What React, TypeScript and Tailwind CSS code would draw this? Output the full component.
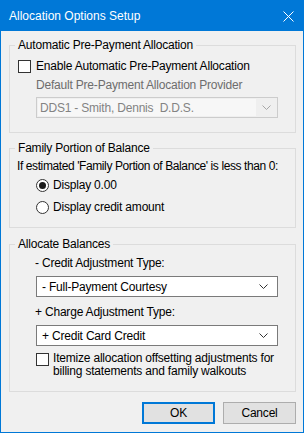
import React from 'react';

const font = { fontFamily: '"Liberation Sans", Arial, sans-serif' };

const Chevron = ({ color = '#333' }: { color?: string }) => (
  <svg width="9" height="5" viewBox="0 0 9 5" fill="none">
    <path d="M0.5 0.5 L4.5 4.5 L8.5 0.5" stroke={color} strokeWidth="1" />
  </svg>
);

const Checkbox = () => (
  <span className="block w-[13px] h-[13px] border border-[#333333] bg-white shrink-0" />
);

const Radio = ({ checked }: { checked?: boolean }) => (
  <span className="flex items-center justify-center w-[13px] h-[13px] rounded-full border border-[#333333] bg-white shrink-0">
    {checked && <span className="block w-[7px] h-[7px] rounded-full bg-[#1a1a1a]" />}
  </span>
);

const Select = ({ value }: { value: string }) => (
  <div className="ml-[26px] w-[242px] h-[21px] border border-[#7a7a7a] bg-white flex items-center justify-between pl-[5px] pr-[9px] text-black">
    <span>{value}</span>
    <Chevron />
  </div>
);

const App: React.FC = () => {
  return (
    <div
      style={font}
      className="w-[304px] h-[433px] border border-[#0078d7] bg-[#f0f0f0] flex flex-col text-[12px] leading-[14px] tracking-[-0.2px] text-black"
    >
      {/* Title bar */}
      <div className="h-[30px] bg-[#0078d7] flex items-center justify-between pl-[8px] pr-[9px] text-white text-[12px] tracking-normal shrink-0">
        <span>Allocation Options Setup</span>
        <svg width="11" height="11" viewBox="0 0 11 11">
          <path d="M0.5 0.5 L10.5 10.5 M10.5 0.5 L0.5 10.5" stroke="white" strokeWidth="1" />
        </svg>
      </div>

      <div className="flex flex-col pl-[8px] pt-[7px]">
        {/* Automatic Pre-Payment Allocation */}
        <fieldset className="w-[287px] border border-[#dcdcdc] pb-[14px]">
          <legend className="ml-[5px] px-[3px] h-[14px]">Automatic Pre-Payment Allocation</legend>
          <div className="mt-[7px] ml-[8px] flex items-center gap-[5px] h-[14px]">
            <Checkbox />
            <span>Enable Automatic Pre-Payment Allocation</span>
          </div>
          <div className="mt-[5px] ml-[26px] h-[14px] text-[#6d6d6d]">Default Pre-Payment Allocation Provider</div>
          <div className="mt-[5px] ml-[26px] w-[242px] h-[21px] border border-[#cccccc] bg-[#efefef] flex items-stretch p-px">
            <span className="flex-1 bg-[#f7f7f7] flex items-center pl-[2px] text-[#838383]">DDS1 - Smith, Dennis&nbsp; D.D.S.</span>
            <span className="w-[20px] flex items-center justify-center">
              <Chevron color="#a6a6a6" />
            </span>
          </div>
        </fieldset>

        {/* Family Portion of Balance */}
        <fieldset className="mt-[8px] w-[287px] border border-[#dcdcdc] pb-[13px]">
          <legend className="ml-[5px] px-[3px] h-[14px]">Family Portion of Balance</legend>
          <div className="mt-[4px] ml-[7px] h-[14px] whitespace-nowrap tracking-[-0.4px]">
            If estimated 'Family Portion of Balance' is less than 0:
          </div>
          <div className="mt-[5px] ml-[26px] flex items-center gap-[4px] h-[14px]">
            <Radio checked />
            <span>Display 0.00</span>
          </div>
          <div className="mt-[8px] ml-[26px] flex items-center gap-[4px] h-[14px]">
            <Radio />
            <span>Display credit amount</span>
          </div>
        </fieldset>

        {/* Allocate Balances */}
        <fieldset className="mt-[9px] w-[287px] border border-[#dcdcdc] pb-[13px]">
          <legend className="ml-[5px] px-[3px] h-[14px]">Allocate Balances</legend>
          <div className="mt-[5px] ml-[25px] h-[14px]">- Credit Adjustment Type:</div>
          <div className="mt-[6px]">
            <Select value="- Full-Payment Courtesy" />
          </div>
          <div className="mt-[8px] ml-[25px] h-[14px]">+ Charge Adjustment Type:</div>
          <div className="mt-[6px]">
            <Select value="+ Credit Card Credit" />
          </div>
          <div className="mt-[6px] ml-[26px] flex items-start gap-[4px]">
            <span className="mt-px">
              <Checkbox />
            </span>
            <span className="leading-[13px]">
              Itemize allocation offsetting adjustments for
              <br />
              billing statements and family walkouts
            </span>
          </div>
        </fieldset>

        {/* Buttons */}
        <div className="mt-[10px] w-[287px] flex justify-end gap-[8px]">
          <button className="w-[73px] h-[22px] border-2 border-[#0078d7] bg-[#e1e1e1] text-[12px]">OK</button>
          <button className="w-[73px] h-[22px] border border-[#adadad] bg-[#e1e1e1] text-[12px]">Cancel</button>
        </div>
      </div>
    </div>
  );
};

export default App;
